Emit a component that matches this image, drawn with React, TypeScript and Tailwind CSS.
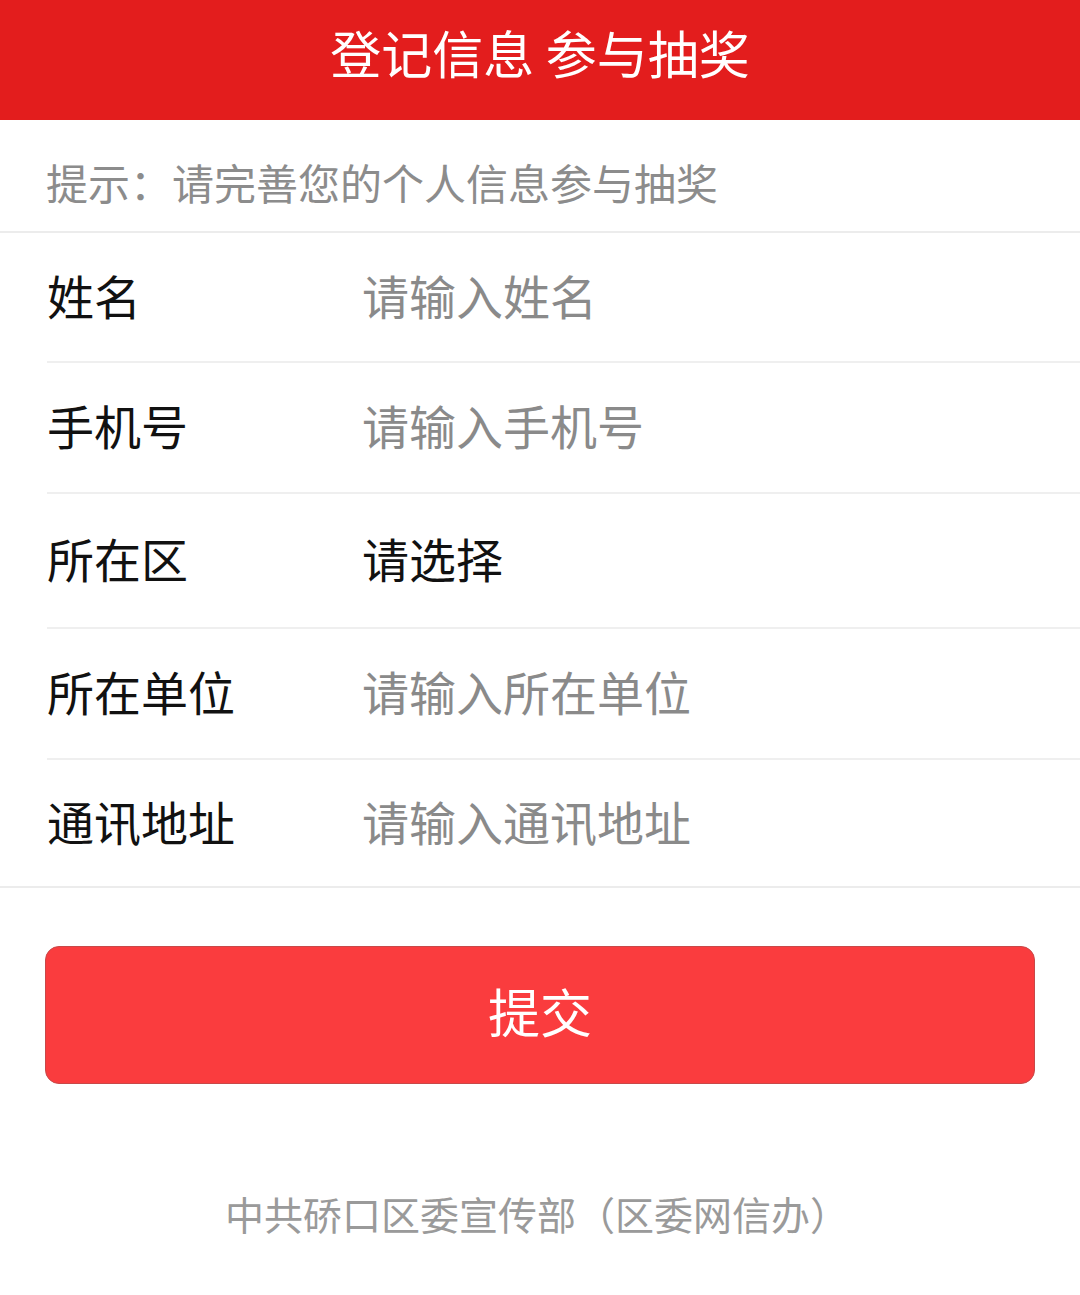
import React from "react";

const rows = [
  { label: "姓名", value: "请输入姓名", placeholder: true, h: "h-[130px]", full: false },
  { label: "手机号", value: "请输入手机号", placeholder: true, h: "h-[131px]", full: false },
  { label: "所在区", value: "请选择", placeholder: false, h: "h-[135px]", full: false },
  { label: "所在单位", value: "请输入所在单位", placeholder: true, h: "h-[131px]", full: false },
  { label: "通讯地址", value: "请输入通讯地址", placeholder: true, h: "h-[128px]", full: true },
];

export default function App() {
  return (
    <div
      className="w-[1080px] h-[1295px] bg-white overflow-hidden"
      style={{ fontFamily: '"Noto Sans CJK SC", "Noto Sans", sans-serif' }}
    >
      <header className="h-[120px] bg-[#e31d1d] flex items-center justify-center pb-[16px]">
        <h1 className="text-white text-[51px] leading-none font-normal">
          登记信息 参与抽奖
        </h1>
      </header>
      <div className="h-[113px] flex items-center pl-[46px] border-b-2 border-[#ececec] pt-[12px]">
        <span className="text-[#8c8c8c] text-[42px] leading-none">
          提示：请完善您的个人信息参与抽奖
        </span>
      </div>
      <div className="flex flex-col">
        {rows.map((r, i) => (
          <div
            key={i}
            className={`${r.h} flex ${r.full ? "border-b-2 border-[#ececec]" : ""}`}
          >
            <div
              className={`flex-1 flex items-center pb-[6px] ${r.full ? "pl-[47px]" : "ml-[47px] border-b-2 border-[#efefef]"}`}
            >
              <div className="w-[315px] text-[47px] leading-none text-[#111111]">{r.label}</div>
              <div
                className={`text-[47px] leading-none ${r.placeholder ? "text-[#8a8a8a]" : "text-[#111111]"}`}
              >
                {r.value}
              </div>
            </div>
          </div>
        ))}
      </div>
      <div className="px-[45px] pt-[58px]">
        <button className="w-[990px] h-[138px] rounded-[14px] bg-[#fa3c3e] border border-[#c84848] flex items-center justify-center pb-[8px]">
          <span className="text-white text-[52px] leading-none">提交</span>
        </button>
      </div>
      <div className="flex justify-center pt-[110px] pr-[6px]">
        <span className="text-[#9a9a9a] text-[39px] leading-none">
          中共硚口区委宣传部（区委网信办）
        </span>
      </div>
    </div>
  );
}
